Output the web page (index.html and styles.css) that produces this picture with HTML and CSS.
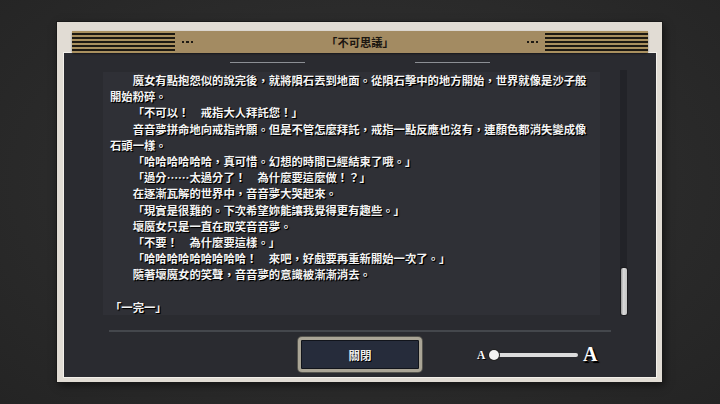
FILE: index.html
```html
<!DOCTYPE html>
<html lang="zh-Hant">
<head>
<meta charset="utf-8">
<link rel="stylesheet" href="styles.css">
</head>
<body>
<div class="frame">
  <div class="header">
    <div class="stripes"></div>
    <div class="dots"><i></i><i></i><i></i></div>
    <div class="title">「不可思議」</div>
    <div class="dots"><i></i><i></i><i></i></div>
    <div class="stripes"></div>
  </div>
  <div class="panel">
    <div class="deco"><span></span><span></span></div>
    <div class="body">
      <div class="text">
        <p class="ind">魔女有點抱怨似的說完後，就將隕石丟到地面。從隕石擊中的地方開始，世界就像是沙子般開始粉碎。</p>
        <p class="ind">「不可以！　戒指大人拜託您！」</p>
        <p class="ind">音音夢拼命地向戒指許願。但是不管怎麼拜託，戒指一點反應也沒有，連顏色都消失變成像石頭一樣。</p>
        <p class="ind">「哈哈哈哈哈哈，真可惜。幻想的時間已經結束了哦。」</p>
        <p class="ind">「過分……太過分了！　為什麼要這麼做！？」</p>
        <p class="ind">在逐漸瓦解的世界中，音音夢大哭起來。</p>
        <p class="ind">「現實是很難的。下次希望妳能讓我覺得更有趣些。」</p>
        <p class="ind">壞魔女只是一直在取笑音音夢。</p>
        <p class="ind">「不要！　為什麼要這樣。」</p>
        <p class="ind">「哈哈哈哈哈哈哈哈哈！　來吧，好戲要再重新開始一次了。」</p>
        <p class="ind">隨著壞魔女的笑聲，音音夢的意識被漸漸消去。</p>
        <p class="gap"></p>
        <p>「一完一」</p>
      </div>
      <div class="track"><div class="thumb"></div></div>
    </div>
    <div class="sep"></div>
    <div class="footer">
      <button class="close">關閉</button>
      <div class="size">
        <span class="a-small">A</span>
        <div class="slider"><div class="bar"></div><div class="knob"></div></div>
        <span class="a-big">A</span>
      </div>
    </div>
  </div>
</div>
</body>
</html>
```
FILE: styles.css
```css
* { box-sizing: border-box; }
html, body { margin: 0; padding: 0; }
body {
  width: 720px;
  height: 404px;
  overflow: hidden;
  background: radial-gradient(ellipse at 50% 45%, #313131 0%, #2b2b2b 55%, #242424 100%);
  font-family: "Noto Sans CJK TC", "Noto Sans", sans-serif;
  padding: 22px 0 0 57px;
}
.frame {
  width: 605px;
  height: 360px;
  background: #e1dcd4;
  padding: 9px 6px 5px 7px;
  display: flex;
  flex-direction: column;
  box-shadow: 0 0 0 1px #1a1a1a, 2px 3px 8px rgba(0,0,0,0.55);
}
.header {
  height: 22px;
  margin: 0 8px;
  background: #a38b62;
  border-radius: 2px;
  display: flex;
  align-items: center;
  position: relative;
  z-index: 1;
  box-shadow: 0 1px 2px rgba(0,0,0,0.45);
}
.stripes {
  width: 103px;
  height: 100%;
  background: repeating-linear-gradient(to bottom, #a9905f 0 1.6px, #1d1912 1.6px 4px);
}
.dots {
  display: flex;
  gap: 2px;
  margin: 0 7px;
}
.dots i {
  width: 2.4px;
  height: 2.4px;
  background: #1e1a14;
  display: block;
}
.title {
  flex: 1;
  text-align: center;
  font-size: 11.3px;
  line-height: 22px;
  color: #1b1610;
  font-weight: 700;
}
.panel {
  flex: 1;
  background: #2a2b30;
  display: flex;
  flex-direction: column;
  box-shadow: 0 0 0 1px #f3f0ea;
  padding-bottom: 5px;
}
.deco {
  height: 19px;
  padding-top: 9px;
  display: flex;
  justify-content: center;
  gap: 110px;
}
.deco span {
  display: block;
  width: 75px;
  height: 1px;
  background: #8c8f94;
}
.body {
  height: 243px;
  display: flex;
  margin-left: 39px;
}
.text {
  width: 497px;
  height: 243px;
  overflow: hidden;
  background: #2f3036;
  padding: 0 12px 0 7px;
  color: #f4f4f4;
  font-size: 11.35px;
  line-height: 16.2px;
  font-weight: 700;
  text-shadow: 1px 1px 0 #000, 1px 1px 1px #000;
}
.text p { margin: 0; }
.text .ind { text-indent: 2em; }
.text .gap { height: 16.2px; }
.track {
  width: 7px;
  margin: -2px 0 0 20px;
  background: #222328;
  display: flex;
  flex-direction: column;
  justify-content: flex-end;
}
.thumb {
  height: 47px;
  margin: 0 0.5px;
  border-radius: 2px;
  background: linear-gradient(to right, #9a9a9a, #d8d8d8 40%, #c4c4c4);
  box-shadow: 0 0 0 1px #1b1b1e;
}
.sep {
  height: 2px;
  margin: 15px 0 0 45px;
  width: 502px;
  background: #44474c;
}
.footer {
  margin-top: 5px;
  height: 35px;
  display: flex;
  align-items: center;
}
.close {
  margin-left: 234px;
  width: 124px;
  height: 35px;
  border: 3px solid #aaa596;
  border-radius: 4px;
  background: #262c3b;
  box-shadow: inset 0 0 0 1px #11141b, 0 0 0 1px #55544e;
  color: #eeeeee;
  font-family: "Noto Sans CJK TC", sans-serif;
  font-size: 11.5px;
  font-weight: 700;
  text-shadow: 1px 1px 0 #000;
  padding: 0;
}
.size {
  margin-left: 55px;
  display: flex;
  align-items: center;
  height: 35px;
}
.a-small, .a-big {
  font-family: "Liberation Serif", serif;
  font-weight: 700;
  color: #ffffff;
}
.a-small {
  font-size: 11.5px;
  width: 8px;
  text-shadow: 1px 1px 0 #000;
}
.a-big {
  font-size: 20px;
  margin-left: 5px;
  text-shadow: 1.5px 1.5px 0 #000, 2px 2px 1px #000;
}
.slider {
  position: relative;
  width: 89px;
  height: 10px;
  margin-left: 4px;
  display: flex;
  align-items: center;
}
.bar {
  margin-left: 5px;
  flex: 1;
  height: 4px;
  border-radius: 2px;
  background: #dcdcdc;
}
.knob {
  position: absolute;
  left: 0;
  top: 0;
  width: 10px;
  height: 10px;
  border-radius: 50%;
  background: #f2f2f2;
  box-shadow: 0 0 0 1px #222;
}
```
